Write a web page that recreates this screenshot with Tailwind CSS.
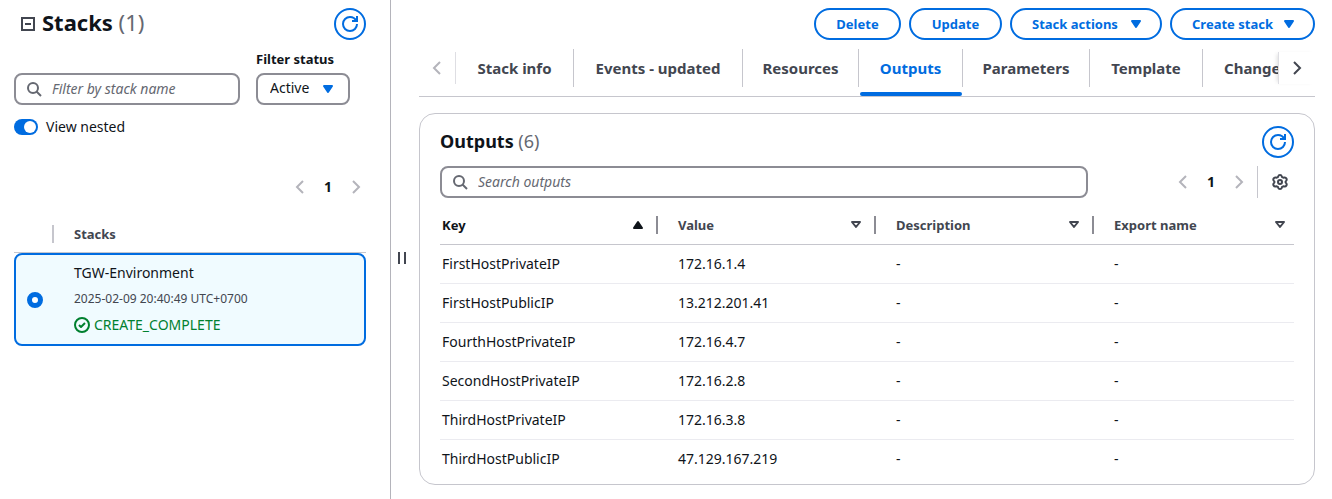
<!DOCTYPE html>
<html lang="en">
<head>
<meta charset="utf-8">
<meta name="viewport" content="width=device-width, initial-scale=1">
<title>Stacks</title>
<script src="https://cdn.jsdelivr.net/npm/@tailwindcss/browser@4"></script>
</head>
<body class="min-h-screen bg-white font-['Noto_Sans','Open_Sans',sans-serif] text-sm leading-5 text-[#0f141a]">
<svg class="hidden" aria-hidden="true">
  <symbol id="refresh" viewBox="0 0 16 16"><path d="M15 8c0 3.87-3.13 7-7 7s-7-3.13-7-7 3.13-7 7-7c2.79 0 5.2 1.63 6.33 4" fill="none" stroke="currentColor" stroke-width="2"/><path d="M10 5h5V0" fill="none" stroke="currentColor" stroke-width="2"/></symbol>
  <symbol id="search" viewBox="0 0 16 16"><circle cx="7" cy="7" r="5" fill="none" stroke="currentColor" stroke-width="2"/><path d="m15 15-4.500-4.500" fill="none" stroke="currentColor" stroke-width="2"/></symbol>
  <symbol id="left" viewBox="0 0 16 16"><path d="M11 2 5 8l6 6" fill="none" stroke="currentColor" stroke-width="2"/></symbol>
  <symbol id="right" viewBox="0 0 16 16"><path d="m5 2 6 6-6 6" fill="none" stroke="currentColor" stroke-width="2"/></symbol>
  <symbol id="caret" viewBox="0 0 16 16"><path d="M4 5h8l-4 6z" fill="currentColor" stroke="currentColor" stroke-width="2" stroke-linejoin="round"/></symbol>
  <symbol id="sort" viewBox="0 0 16 16"><path d="M4 5h8l-4 5z" fill="none" stroke="currentColor" stroke-width="2" stroke-linejoin="round"/></symbol>
  <symbol id="sorted" viewBox="0 0 16 16"><path d="M4 11h8L8 5z" fill="currentColor" stroke="currentColor" stroke-width="2" stroke-linejoin="round"/></symbol>
  <symbol id="gear" viewBox="0 0 16 16"><path d="M6.300 2Q6.600 1 8 1t1.700 1l.4 1.100 1.200.6 1.300-.2q1.200-.1 1.800 1t0 2l-.8 1v1l.8 1q.6.900 0 2t-1.800 1l-1.300-.2-1.200.6L9.700 14Q9.400 15 8 15t-1.700-1l-.4-1.100-1.200-.6-1.300.2q-1.200.1-1.800-1t0-2l.8-1v-1l-.8-1q-.6-.9 0-2t1.800-1l1.300.2 1.200-.6z" fill="none" stroke="currentColor" stroke-width="2" stroke-linejoin="round"/><circle cx="8" cy="8" r="2" fill="none" stroke="currentColor" stroke-width="2"/></symbol>
</svg>
<div class="flex min-h-screen">
  <aside class="w-[391px] shrink-0 border-r border-[#b4b4bb] pt-2 pr-6 pl-3.5">
    <div class="flex h-8 items-center justify-between">
      <div class="flex items-center gap-1.5 pl-1.5">
        <button type="button" aria-label="Collapse stacks" class="text-[#424650]"><svg class="size-4" viewBox="0 0 16 16"><path d="M2 2h12v12H2zM5 8h6" fill="none" stroke="currentColor" stroke-width="2"/></svg></button>
        <h1 class="-mt-1 text-[22px] leading-7 font-bold">Stacks <span class="font-normal text-[#656871]">(1)</span></h1>
      </div>
      <button type="button" aria-label="Refresh stacks" class="flex size-8 items-center justify-center rounded-full border-2 border-[#006ce0] text-[#006ce0]"><svg class="size-4"><use href="#refresh"/></svg></button>
    </div>
    <div class="mt-[9px] flex items-end gap-4 pr-4">
      <div class="relative min-w-0 flex-1">
        <svg class="absolute top-2 left-3 size-4 text-[#656871]"><use href="#search"/></svg>
        <input type="search" aria-label="Filter by stack name" placeholder="Filter by stack name" class="block h-8 w-full rounded-lg border-2 border-[#8c8c94] pb-0.5 pl-9 placeholder:text-[#656871] placeholder:italic">
      </div>
      <div class="w-[94px]">
        <label for="status" class="mb-1 block text-[13px] font-bold">Filter status</label>
        <div class="relative">
          <select id="status" class="block h-8 w-full appearance-none rounded-lg border-2 border-[#8c8c94] pb-0.5 pl-3"><option>Active</option></select>
          <svg class="pointer-events-none absolute top-2 right-3.5 size-4 text-[#006ce0]"><use href="#caret"/></svg>
        </div>
      </div>
    </div>
    <label class="mt-3 flex h-5 items-center gap-2">
      <input type="checkbox" role="switch" checked class="peer sr-only">
      <span class="flex h-4 w-6 items-center justify-end rounded-full bg-[#006ce0] pr-0.5"><span class="size-3 rounded-full bg-white"></span></span>
      View nested
    </label>
    <nav aria-label="Stack pages" class="mt-10 flex h-5 items-center justify-end gap-3 text-[#b4b4bb]">
      <button type="button" aria-label="Previous page" disabled><svg class="size-4"><use href="#left"/></svg></button>
      <button type="button" class="w-4 font-bold text-[#0f141a]">1</button>
      <button type="button" aria-label="Next page" disabled class="mr-0.5"><svg class="size-4"><use href="#right"/></svg></button>
    </nav>
    <div class="mt-7 flex h-7 border-b border-[#c6c6cd]">
      <div class="h-[18px] w-10 border-r-2 border-[#c6c6cd]"></div>
      <h2 class="pl-5 text-[13px] leading-[18px] font-bold text-[#424650]">Stacks</h2>
    </div>
    <label class="flex h-[93px] items-center rounded-lg border-2 border-[#006ce0] bg-[#f0fbff]">
      <input type="radio" name="stack" checked aria-label="TGW-Environment" class="ml-[11px] size-4 appearance-none rounded-full border-[5px] border-[#006ce0] bg-white">
      <span class="ml-[31px] flex flex-col gap-1.5 pb-0.5">
        <span>TGW-Environment</span>
        <span class="text-xs leading-5 text-[#424650]">2025-02-09 20:40:49 UTC+0700</span>
        <span class="flex items-center gap-1 text-[#00802f]"><svg class="size-4" viewBox="0 0 16 16"><path d="M8 15A7 7 0 1 0 8 1a7 7 0 0 0 0 14ZM5 8l2 2 4-4" fill="none" stroke="currentColor" stroke-width="2" stroke-linejoin="round"/></svg>CREATE_COMPLETE</span>
      </span>
    </label>
  </aside>

  <button type="button" aria-label="Resize panel" class="flex w-7 shrink-0 items-center justify-start gap-1 pt-4 pl-[7px]"><span class="h-3 w-0.5 bg-[#424650]"></span><span class="h-3 w-0.5 bg-[#424650]"></span></button>

  <main class="min-w-0 flex-1 pt-2 pr-[17px]">
    <div class="flex h-8 justify-end gap-2 text-[13px] font-bold text-[#006ce0]">
      <button type="button" class="min-w-[87px] rounded-full border-2 border-[#006ce0] px-5">Delete</button>
      <button type="button" class="min-w-[93px] rounded-full border-2 border-[#006ce0] px-5">Update</button>
      <button type="button" class="flex min-w-[152px] items-center justify-between gap-2 rounded-full border-2 border-[#006ce0] px-4 pl-5">Stack actions<svg class="size-4"><use href="#caret"/></svg></button>
      <button type="button" class="flex min-w-[145px] items-center justify-between gap-2 rounded-full border-2 border-[#006ce0] px-4 pl-5">Create stack<svg class="size-4"><use href="#caret"/></svg></button>
    </div>
    <div class="flex h-[57px] border-b border-[#c6c6cd]">
      <button type="button" aria-label="Scroll tabs left" disabled class="mt-3 flex h-8 w-[37px] shrink-0 items-center justify-center border-r border-[#dedee3] text-[#b4b4bb]"><svg class="size-4"><use href="#left"/></svg></button>
      <div role="tablist" class="flex min-w-0 flex-1 overflow-hidden pt-[9px] text-[15px] font-bold whitespace-nowrap text-[#424650]">
        <button type="button" role="tab" class="h-[38px] w-[118px] shrink-0 border-r border-[#c6c6cd]">Stack info</button>
        <button type="button" role="tab" class="h-[38px] w-[169px] shrink-0 border-r border-[#c6c6cd]">Events - updated</button>
        <button type="button" role="tab" class="h-[38px] w-[116px] shrink-0 border-r border-[#c6c6cd]">Resources</button>
        <div class="flex w-[104px] shrink-0 flex-col justify-between">
          <button type="button" role="tab" aria-selected="true" class="h-[38px] border-r border-[#c6c6cd] text-[#006ce0]">Outputs</button>
          <span class="mx-px h-1 rounded-sm bg-[#006ce0]"></span>
        </div>
        <button type="button" role="tab" class="h-[38px] w-[127px] shrink-0 border-r border-[#c6c6cd]">Parameters</button>
        <button type="button" role="tab" class="h-[38px] w-[113px] shrink-0 border-r border-[#c6c6cd]">Template</button>
        <button type="button" role="tab" class="h-[38px] shrink-0 px-[21px]">Change sets</button>
      </div>
      <button type="button" aria-label="Scroll tabs right" class="mt-3 flex h-8 w-[37px] shrink-0 items-center justify-center border-l border-[#dedee3] text-[#424650] shadow-[-3px_0_4px_-2px_#00000022]"><svg class="size-4"><use href="#right"/></svg></button>
    </div>

    <section class="mt-4 rounded-2xl border border-[#c6c6cd] px-5 pt-3 pb-1.5">
      <div class="flex h-8 items-center justify-between">
        <h2 class="pb-0.5 text-lg leading-6 font-bold">Outputs <span class="font-normal text-[#656871]">(6)</span></h2>
        <button type="button" aria-label="Refresh outputs" class="flex size-8 items-center justify-center rounded-full border-2 border-[#006ce0] text-[#006ce0]"><svg class="size-4"><use href="#refresh"/></svg></button>
      </div>
      <div class="mt-2 flex h-8 items-center justify-between">
        <div class="relative w-full max-w-[648px]">
          <svg class="absolute top-2 left-3 size-4 text-[#656871]"><use href="#search"/></svg>
          <input type="search" aria-label="Search outputs" placeholder="Search outputs" class="block h-8 w-full rounded-lg border-2 border-[#8c8c94] pb-0.5 pl-9 placeholder:text-[#656871] placeholder:italic">
        </div>
        <div class="flex items-center">
          <nav aria-label="Output pages" class="flex items-center gap-3 pr-2.5 text-[#b4b4bb]">
            <button type="button" aria-label="Previous page" disabled><svg class="size-4"><use href="#left"/></svg></button>
            <button type="button" class="w-4 font-bold text-[#0f141a]">1</button>
            <button type="button" aria-label="Next page" disabled><svg class="size-4"><use href="#right"/></svg></button>
          </nav>
          <button type="button" aria-label="Preferences" class="flex h-8 items-center border-l border-[#c6c6cd] pr-1.5 pl-3.5 text-[#424650]"><svg class="size-4"><use href="#gear"/></svg></button>
        </div>
      </div>
      <table class="mt-2 w-full table-fixed text-left">
        <thead class="text-[13px] text-[#424650]">
          <tr class="h-[38px] border-b border-[#c6c6cd]">
            <th class="w-[218px] p-0 text-[#0f141a]"><div class="flex h-[18px] items-center justify-between border-r-2 border-[#8c8c94] pr-2.5 pl-0.5">Key<svg class="size-4"><use href="#sorted"/></svg></div></th>
            <th class="w-[218px] p-0"><div class="flex h-[18px] items-center justify-between border-r-2 border-[#8c8c94] pr-2.5 pl-5">Value<svg class="size-4"><use href="#sort"/></svg></div></th>
            <th class="w-[218px] p-0"><div class="flex h-[18px] items-center justify-between border-r-2 border-[#8c8c94] pr-2.5 pl-5">Description<svg class="size-4"><use href="#sort"/></svg></div></th>
            <th class="p-0"><div class="flex h-[18px] items-center justify-between pr-1.5 pl-5">Export name<svg class="size-4"><use href="#sort"/></svg></div></th>
          </tr>
        </thead>
        <tbody class="[&_td]:p-0 [&_td]:pl-5 [&_td:first-child]:pl-0.5 [&_tr]:h-[39px] [&_tr]:border-b [&_tr]:border-[#ebebf0] [&_tr:last-child]:border-0">
          <tr><td>FirstHostPrivateIP</td><td>172.16.1.4</td><td>-</td><td>-</td></tr>
          <tr><td>FirstHostPublicIP</td><td>13.212.201.41</td><td>-</td><td>-</td></tr>
          <tr><td>FourthHostPrivateIP</td><td>172.16.4.7</td><td>-</td><td>-</td></tr>
          <tr><td>SecondHostPrivateIP</td><td>172.16.2.8</td><td>-</td><td>-</td></tr>
          <tr><td>ThirdHostPrivateIP</td><td>172.16.3.8</td><td>-</td><td>-</td></tr>
          <tr><td>ThirdHostPublicIP</td><td>47.129.167.219</td><td>-</td><td>-</td></tr>
        </tbody>
      </table>
    </section>
  </main>
</div>
</body>
</html>
